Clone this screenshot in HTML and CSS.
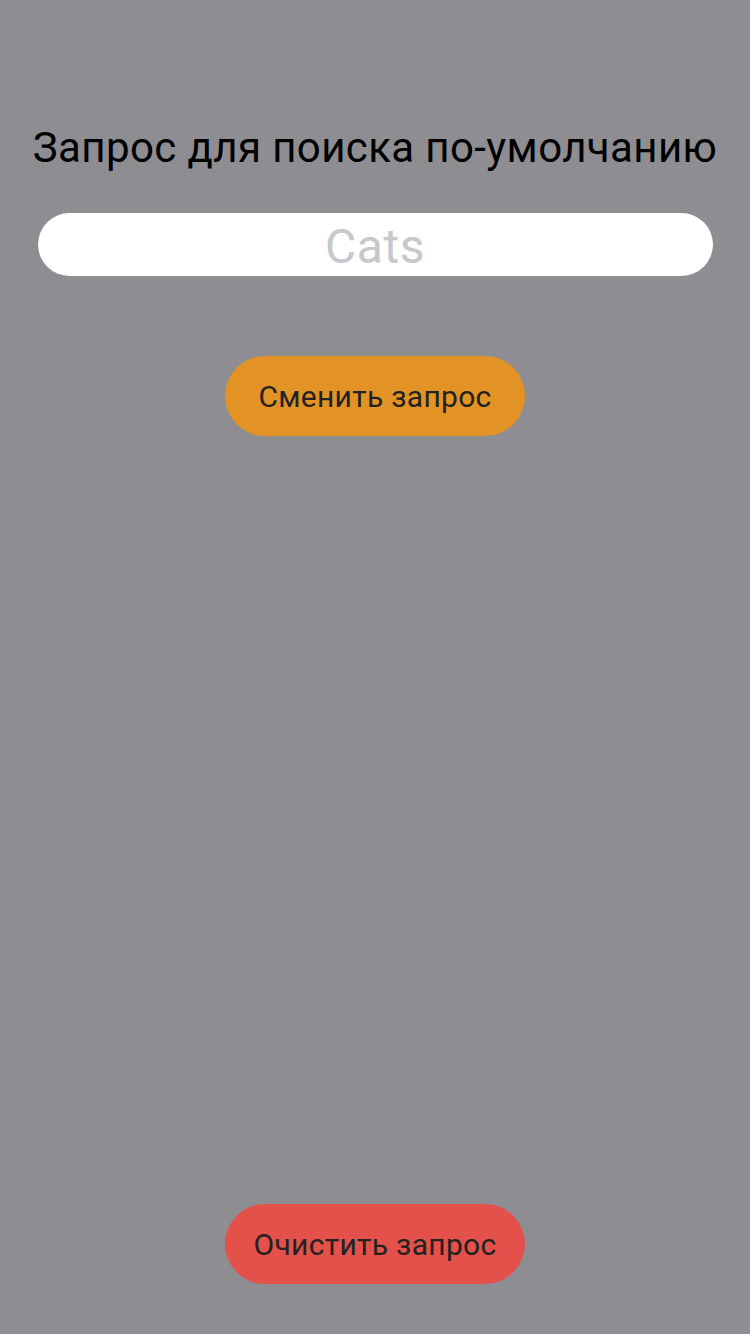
FILE: index.html
```html
<!DOCTYPE html>
<html lang="ru">
<head>
<meta charset="utf-8">
<link rel="stylesheet" href="styles.css">
</head>
<body>
<main class="screen">
  <section class="top">
    <h1 class="title">Запрос для поиска по-умолчанию</h1>
    <div class="field"><span class="placeholder">Cats</span></div>
    <button class="btn btn-change">Сменить запрос</button>
  </section>
  <button class="btn btn-clear">Очистить запрос</button>
</main>
</body>
</html>
```

FILE: styles.css
```css
html, body {
  margin: 0;
  padding: 0;
}
body {
  background: #8e8d92;
  font-family: Roboto, "Noto Sans", sans-serif;
}
.screen {
  width: 750px;
  height: 1334px;
  display: flex;
  flex-direction: column;
  align-items: center;
  justify-content: space-between;
  box-sizing: border-box;
  padding: 124px 0 50px;
}
.top {
  display: flex;
  flex-direction: column;
  align-items: center;
  width: 100%;
}
.title {
  margin: 0;
  font-weight: 400;
  font-size: 42px;
  line-height: 48px;
  color: #000;
  letter-spacing: 0.4px;
}
.field {
  margin-top: 41px;
  width: 675px;
  height: 63px;
  background: #fff;
  border-radius: 32px;
  display: flex;
  align-items: center;
  justify-content: center;
}
.placeholder {
  font-size: 48px;
  color: #c7c7cc;
  line-height: 1;
  letter-spacing: 0.5px;
  margin-top: 4px;
}
.btn {
  width: 300px;
  height: 80px;
  border: none;
  border-radius: 40px;
  font-family: Roboto, "Noto Sans", sans-serif;
  font-size: 30px;
  letter-spacing: 0.3px;
  color: #222;
  padding: 0;
}
.btn-change {
  margin-top: 80px;
  background: #e39326;
}
.btn-clear {
  background: #e3514a;
}
```
